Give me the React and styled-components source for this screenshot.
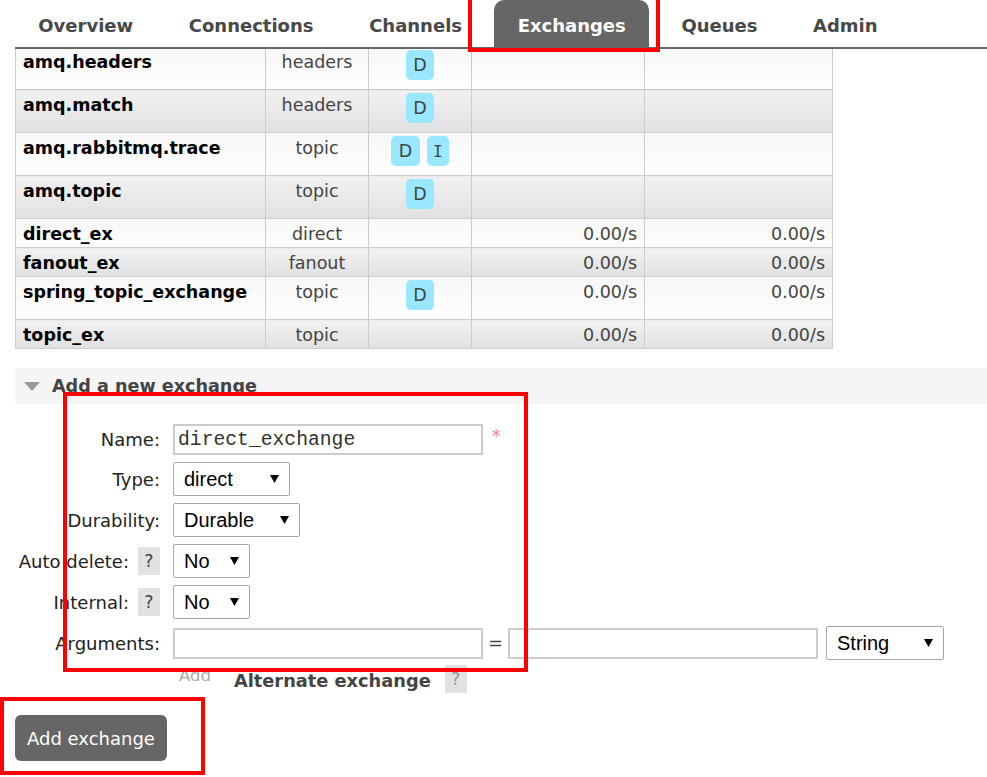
import React from 'react';
import styled, { createGlobalStyle } from 'styled-components';

const GlobalStyle = createGlobalStyle`
  html, body { margin: 0; padding: 0; background: #fff; }
  body { font-family: "DejaVu Sans", Verdana, sans-serif; color: #222; overflow: hidden; }
  * { box-sizing: border-box; }
`;

const Page = styled.div`
  position: relative;
  width: 987px;
  height: 777px;
  overflow: hidden;
  padding-left: 15px;
`;

const TabBar = styled.ul`
  list-style: none;
  margin: 0;
  padding: 0;
  display: flex;
  gap: 9px;
  height: 49px;
  border-bottom: 2px solid #666;
`;

const Tab = styled.li`
  height: 47px;
  padding: 3px 23.3px 0;
  display: flex;
  align-items: center;
  font-size: 18px;
  font-weight: bold;
  color: ${(p) => (p.$active ? '#fff' : '#484848')};
  background: ${(p) => (p.$active ? '#666' : 'transparent')};
  border-radius: 10px 10px 0 0;
`;

const Table = styled.table`
  border-collapse: collapse;
  table-layout: fixed;
  width: 817px;
  font-size: 17.5px;
  line-height: 21px;
`;

const Cell = styled.td`
  border: 1px solid #ccc;
  border-top: ${(p) => (p.$first ? 'none' : '1px solid #ccc')};
  padding: ${(p) => (p.$first ? '3px' : '5px')} 7px 2px;
  vertical-align: top;
  text-align: ${(p) => p.$align || 'left'};
  font-weight: ${(p) => (p.$bold ? 'bold' : 'normal')};
  color: ${(p) => (p.$bold ? '#000' : '#444')};
  white-space: nowrap;
  overflow: hidden;
  background: ${(p) =>
    p.$alt
      ? 'linear-gradient(#f1f1f1, #e1e1e1)'
      : 'linear-gradient(#f7f7f7, #fefefe)'};
`;

const Badges = styled.div`
  display: flex;
  justify-content: center;
  gap: 7px;
  margin: -2px 0 7px;
`;

const Badge = styled.abbr`
  display: inline-flex;
  align-items: center;
  justify-content: center;
  height: 30px;
  min-width: 22px;
  padding: ${(p) => (p.$serif ? '0' : '0 7.5px')};
  border-radius: 5px;
  background: #99e8ff;
  color: #444;
  font-family: ${(p) =>
    p.$serif ? '"DejaVu Sans Mono", monospace' : '"DejaVu Sans", Verdana, sans-serif'};
  font-size: ${(p) => (p.$serif ? '16px' : '17.5px')};
  text-decoration: none;
`;

const SectionHeader = styled.h2`
  margin: 19px 0 0;
  height: 36px;
  background: #f5f5f5;
  display: flex;
  align-items: center;
  gap: 12px;
  padding: 0 0 0 9px;
  font-size: 17.6px;
  font-weight: bold;
  color: #444;
`;

const Form = styled.div`
  margin-top: 20px;
  display: flex;
  flex-direction: column;
  gap: 7px;
`;

const FormRow = styled.div`
  display: flex;
  align-items: center;
  min-height: ${(p) => (p.$h ? `${p.$h}px` : '34px')};
`;

const Label = styled.div`
  width: 145px;
  display: flex;
  justify-content: flex-end;
  align-items: center;
  gap: 9px;
  font-size: 18px;
  color: #222;
  white-space: nowrap;
`;

const Controls = styled.div`
  margin-left: 13px;
  display: flex;
  align-items: center;
`;

const Help = styled.span`
  display: inline-flex;
  align-items: center;
  justify-content: center;
  flex: none;
  width: 22px;
  height: 28px;
  background: #e2e2e2;
  color: ${(p) => (p.$muted ? '#999' : '#444')};
  font-size: 17.5px;
`;

const TextInput = styled.input`
  width: 310px;
  height: 31px;
  border: 2px solid #ccc;
  padding: 0 3px;
  margin: 0;
  font-family: "Liberation Mono", "Courier New", monospace;
  font-size: 19.7px;
  color: #333;
  background: #fff;
  outline: none;
`;

const Select = styled.div`
  width: ${(p) => p.$w}px;
  height: 34px;
  border: 1px solid #a6a6a6;
  border-radius: 2px;
  display: flex;
  align-items: center;
  justify-content: space-between;
  padding: 0 10px 0 10px;
  margin-left: ${(p) => (p.$ml ? `${p.$ml}px` : '0')};
  font-family: "Liberation Sans", Arial, sans-serif;
  font-size: 20px;
  color: #000;
  background: #fff;
`;

const Star = styled.span`
  align-self: flex-start;
  margin: 2px 0 0 9px;
  color: #ff8080;
  font-size: 17px;
  line-height: 21px;
`;

const Equals = styled.span`
  width: 25px;
  text-align: center;
  font-size: 17.5px;
  color: #444;
`;

const AltRow = styled.div`
  margin-top: 5px;
  display: flex;
  align-items: center;
  padding-left: 164px;
  height: 27px;
`;

const AddLink = styled.span`
  align-self: flex-start;
  font-size: 16.5px;
  line-height: 21px;
  color: #aaa;
`;

const AltLabel = styled.span`
  margin: 0 14px 0 23px;
  font-size: 17.8px;
  font-weight: bold;
  color: #444;
  padding-top: 3px;
`;

const Button = styled.button`
  margin-top: 23px;
  height: 46px;
  padding: 0 12px;
  border: none;
  border-radius: 6px;
  background: #666;
  color: #fff;
  font-family: "DejaVu Sans", Verdana, sans-serif;
  font-size: 18px;
`;

const RedFrame = styled.div`
  position: absolute;
  left: ${(p) => p.$x}px;
  top: ${(p) => p.$y}px;
  width: ${(p) => p.$w}px;
  height: ${(p) => p.$h}px;
  border: 4px solid #f00;
  pointer-events: none;
`;

const Arrow = () => (
  <svg width="9" height="8" viewBox="0 0 9 8">
    <polygon points="0,0 9,0 4.5,8" fill="#000" />
  </svg>
);

const Caret = () => (
  <svg width="16" height="9" viewBox="0 0 16 9">
    <polygon points="0,0 16,0 8,9" fill="#999" />
  </svg>
);

const tabs = ['Overview', 'Connections', 'Channels', 'Exchanges', 'Queues', 'Admin'];

const rows = [
  { name: 'amq.headers', type: 'headers', badges: ['D'] },
  { name: 'amq.match', type: 'headers', badges: ['D'] },
  { name: 'amq.rabbitmq.trace', type: 'topic', badges: ['D', 'I'] },
  { name: 'amq.topic', type: 'topic', badges: ['D'] },
  { name: 'direct_ex', type: 'direct', badges: [], rate: true },
  { name: 'fanout_ex', type: 'fanout', badges: [], rate: true },
  { name: 'spring_topic_exchange', type: 'topic', badges: ['D'], rate: true },
  { name: 'topic_ex', type: 'topic', badges: [], rate: true },
];

export default function App() {
  return (
    <Page>
      <GlobalStyle />
      <TabBar>
        {tabs.map((t) => (
          <Tab key={t} $active={t === 'Exchanges'}>
            {t}
          </Tab>
        ))}
      </TabBar>

      <Table>
        <colgroup>
          <col style={{ width: 250 }} />
          <col style={{ width: 103 }} />
          <col style={{ width: 103 }} />
          <col style={{ width: 173 }} />
          <col style={{ width: 188 }} />
        </colgroup>
        <tbody>
          {rows.map((r, i) => {
            const alt = i % 2 === 1;
            const first = i === 0;
            return (
              <tr key={r.name}>
                <Cell $alt={alt} $first={first} $bold>
                  {r.name}
                </Cell>
                <Cell $alt={alt} $first={first} $align="center">
                  {r.type}
                </Cell>
                <Cell $alt={alt} $first={first} $align="center">
                  {r.badges.length > 0 && (
                    <Badges>
                      {r.badges.map((b) => (
                        <Badge
                          key={b}
                          $serif={b === 'I'}
                          title={b === 'D' ? 'Durable' : 'Internal'}
                        >
                          {b}
                        </Badge>
                      ))}
                    </Badges>
                  )}
                </Cell>
                <Cell $alt={alt} $first={first} $align="right">
                  {r.rate ? '0.00/s' : ''}
                </Cell>
                <Cell $alt={alt} $first={first} $align="right">
                  {r.rate ? '0.00/s' : ''}
                </Cell>
              </tr>
            );
          })}
        </tbody>
      </Table>

      <SectionHeader>
        <Caret />
        Add a new exchange
      </SectionHeader>

      <Form>
        <FormRow $h={31}>
          <Label>Name:</Label>
          <Controls>
            <TextInput defaultValue="direct_exchange" />
            <Star>*</Star>
          </Controls>
        </FormRow>
        <FormRow>
          <Label>Type:</Label>
          <Controls>
            <Select $w={117}>
              direct <Arrow />
            </Select>
          </Controls>
        </FormRow>
        <FormRow>
          <Label>Durability:</Label>
          <Controls>
            <Select $w={127}>
              Durable <Arrow />
            </Select>
          </Controls>
        </FormRow>
        <FormRow>
          <Label>
            Auto delete: <Help>?</Help>
          </Label>
          <Controls>
            <Select $w={77}>
              No <Arrow />
            </Select>
          </Controls>
        </FormRow>
        <FormRow>
          <Label>
            Internal: <Help>?</Help>
          </Label>
          <Controls>
            <Select $w={77}>
              No <Arrow />
            </Select>
          </Controls>
        </FormRow>
        <FormRow>
          <Label>Arguments:</Label>
          <Controls>
            <TextInput />
            <Equals>=</Equals>
            <TextInput />
            <Select $w={118} $ml={8}>
              String <Arrow />
            </Select>
          </Controls>
        </FormRow>
      </Form>

      <AltRow>
        <AddLink>Add</AddLink>
        <AltLabel>Alternate exchange</AltLabel>
        <Help $muted>?</Help>
      </AltRow>

      <Button>Add exchange</Button>

      <RedFrame $x={468} $y={-6} $w={192} $h={58} />
      <RedFrame $x={63} $y={392} $w={465} $h={280} />
      <RedFrame $x={0} $y={697} $w={205} $h={78} />
    </Page>
  );
}
